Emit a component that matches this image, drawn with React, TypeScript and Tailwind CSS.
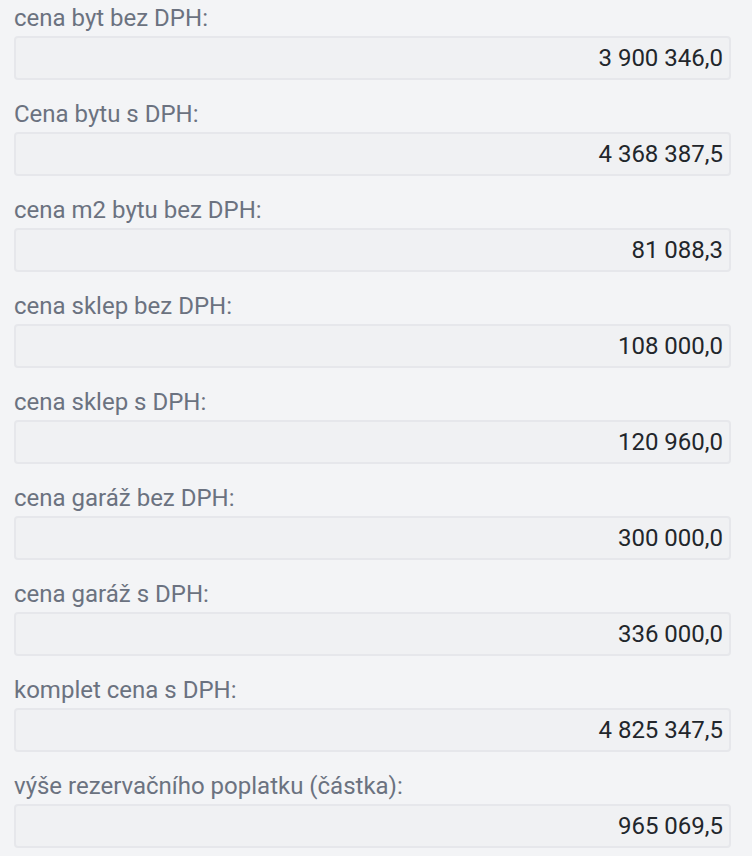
import React from "react";

const rows = [
  { label: "cena byt bez DPH:", value: "3 900 346,0" },
  { label: "Cena bytu s DPH:", value: "4 368 387,5" },
  { label: "cena m2 bytu bez DPH:", value: "81 088,3" },
  { label: "cena sklep bez DPH:", value: "108 000,0" },
  { label: "cena sklep s DPH:", value: "120 960,0" },
  { label: "cena garáž bez DPH:", value: "300 000,0" },
  { label: "cena garáž s DPH:", value: "336 000,0" },
  { label: "komplet cena s DPH:", value: "4 825 347,5" },
  { label: "výše rezervačního poplatku (částka):", value: "965 069,5" },
];

const App: React.FC = () => {
  return (
    <div className="min-h-[856px] w-full bg-[#f3f4f6] pl-[14px] pr-[21px] pt-[4px] font-['Roboto',sans-serif]">
      {rows.map((row) => (
        <div key={row.label} className="mb-[20px]">
          {/* label */}
          <div className="text-[24px] leading-[28px] text-[#6b7280] mb-[4px]">{row.label}</div>
          {/* read-only field */}
          <div className="h-[44px] flex items-center justify-end rounded-[4px] border-2 border-[#e6e7eb] bg-[#f0f1f3] pr-[6px] text-[24px] text-[#22262b]">
            {row.value}
          </div>
        </div>
      ))}
    </div>
  );
};

export default App;
